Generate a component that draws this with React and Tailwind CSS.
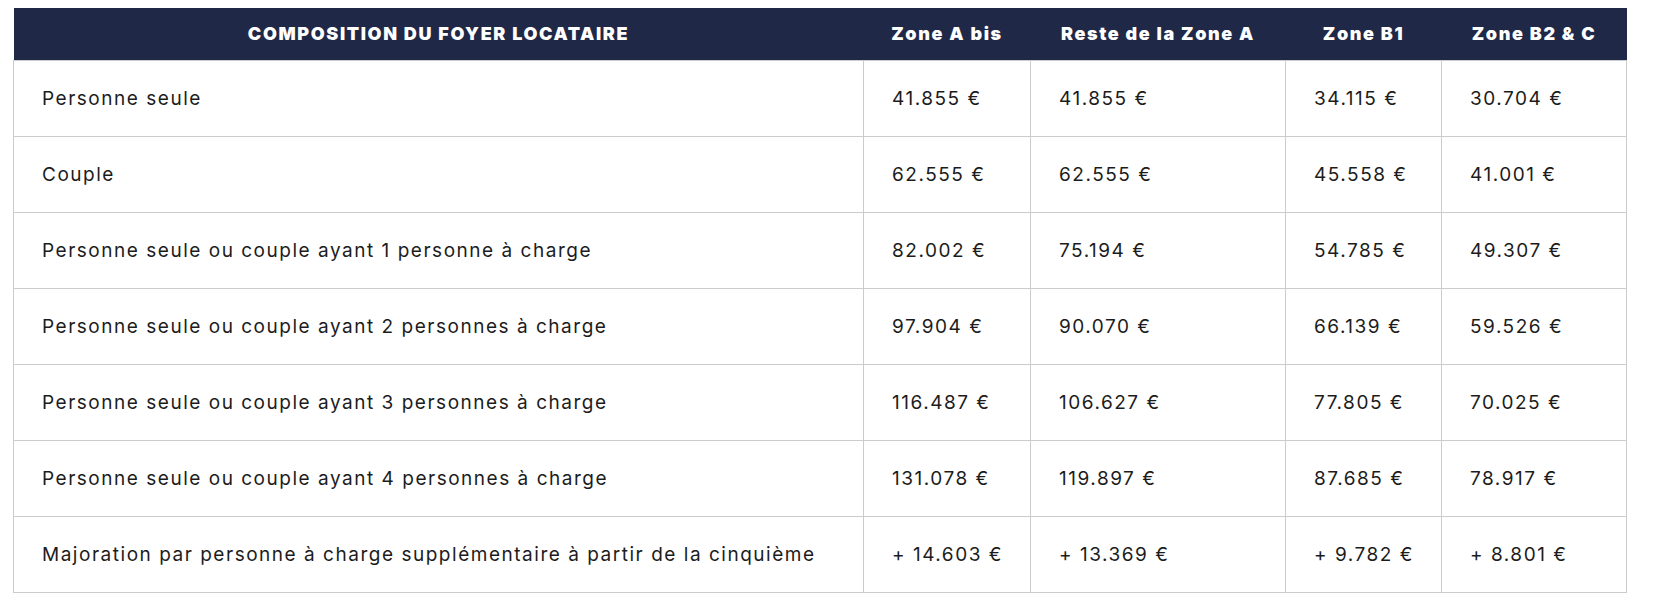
const rows = [
  ['Personne seule', '41.855 €', '41.855 €', '34.115 €', '30.704 €'],
  ['Couple', '62.555 €', '62.555 €', '45.558 €', '41.001 €'],
  ['Personne seule ou couple ayant 1 personne à charge', '82.002 €', '75.194 €', '54.785 €', '49.307 €'],
  ['Personne seule ou couple ayant 2 personnes à charge', '97.904 €', '90.070 €', '66.139 €', '59.526 €'],
  ['Personne seule ou couple ayant 3 personnes à charge', '116.487 €', '106.627 €', '77.805 €', '70.025 €'],
  ['Personne seule ou couple ayant 4 personnes à charge', '131.078 €', '119.897 €', '87.685 €', '78.917 €'],
  ['Majoration par personne à charge supplémentaire à partir de la cinquième', '+ 14.603 €', '+ 13.369 €', '+ 9.782 €', '+ 8.801 €'],
];

const headers = ['COMPOSITION DU FOYER LOCATAIRE', 'Zone A bis', 'Reste de la Zone A', 'Zone B1', 'Zone B2 & C'];

const App = () => {
    return (
        <div className="min-h-screen bg-white pt-[8px] pl-[13px]">
            <table className="w-[1613px] table-fixed border-collapse font-['Inter',sans-serif]">
                <colgroup>
                    <col className="w-[850px]" />
                    <col className="w-[167px]" />
                    <col className="w-[255px]" />
                    <col className="w-[156px]" />
                    <col className="w-[185px]" />
                </colgroup>
                <thead>
                    <tr className="bg-[#1f2847] h-[52px]">
                        {headers.map((h) => (
                            <th key={h} className="px-1 text-center text-[18px] font-black text-white tracking-[0.09em] whitespace-nowrap">
                                {h}
                            </th>
                        ))}
                    </tr>
                </thead>
                <tbody>
                    {rows.map((row, i) => (
                        <tr key={i} className="h-[76px]">
                            {row.map((cell, j) => (
                                <td key={j} className="border border-[#cccccc] pl-[28px] pr-2 pt-[2px] text-left text-[19px] text-[#1c1c1c] tracking-[0.08em] whitespace-nowrap">
                                    {cell}
                                </td>
                            ))}
                        </tr>
                    ))}
                </tbody>
            </table>
        </div>
    );
};

export default App;
